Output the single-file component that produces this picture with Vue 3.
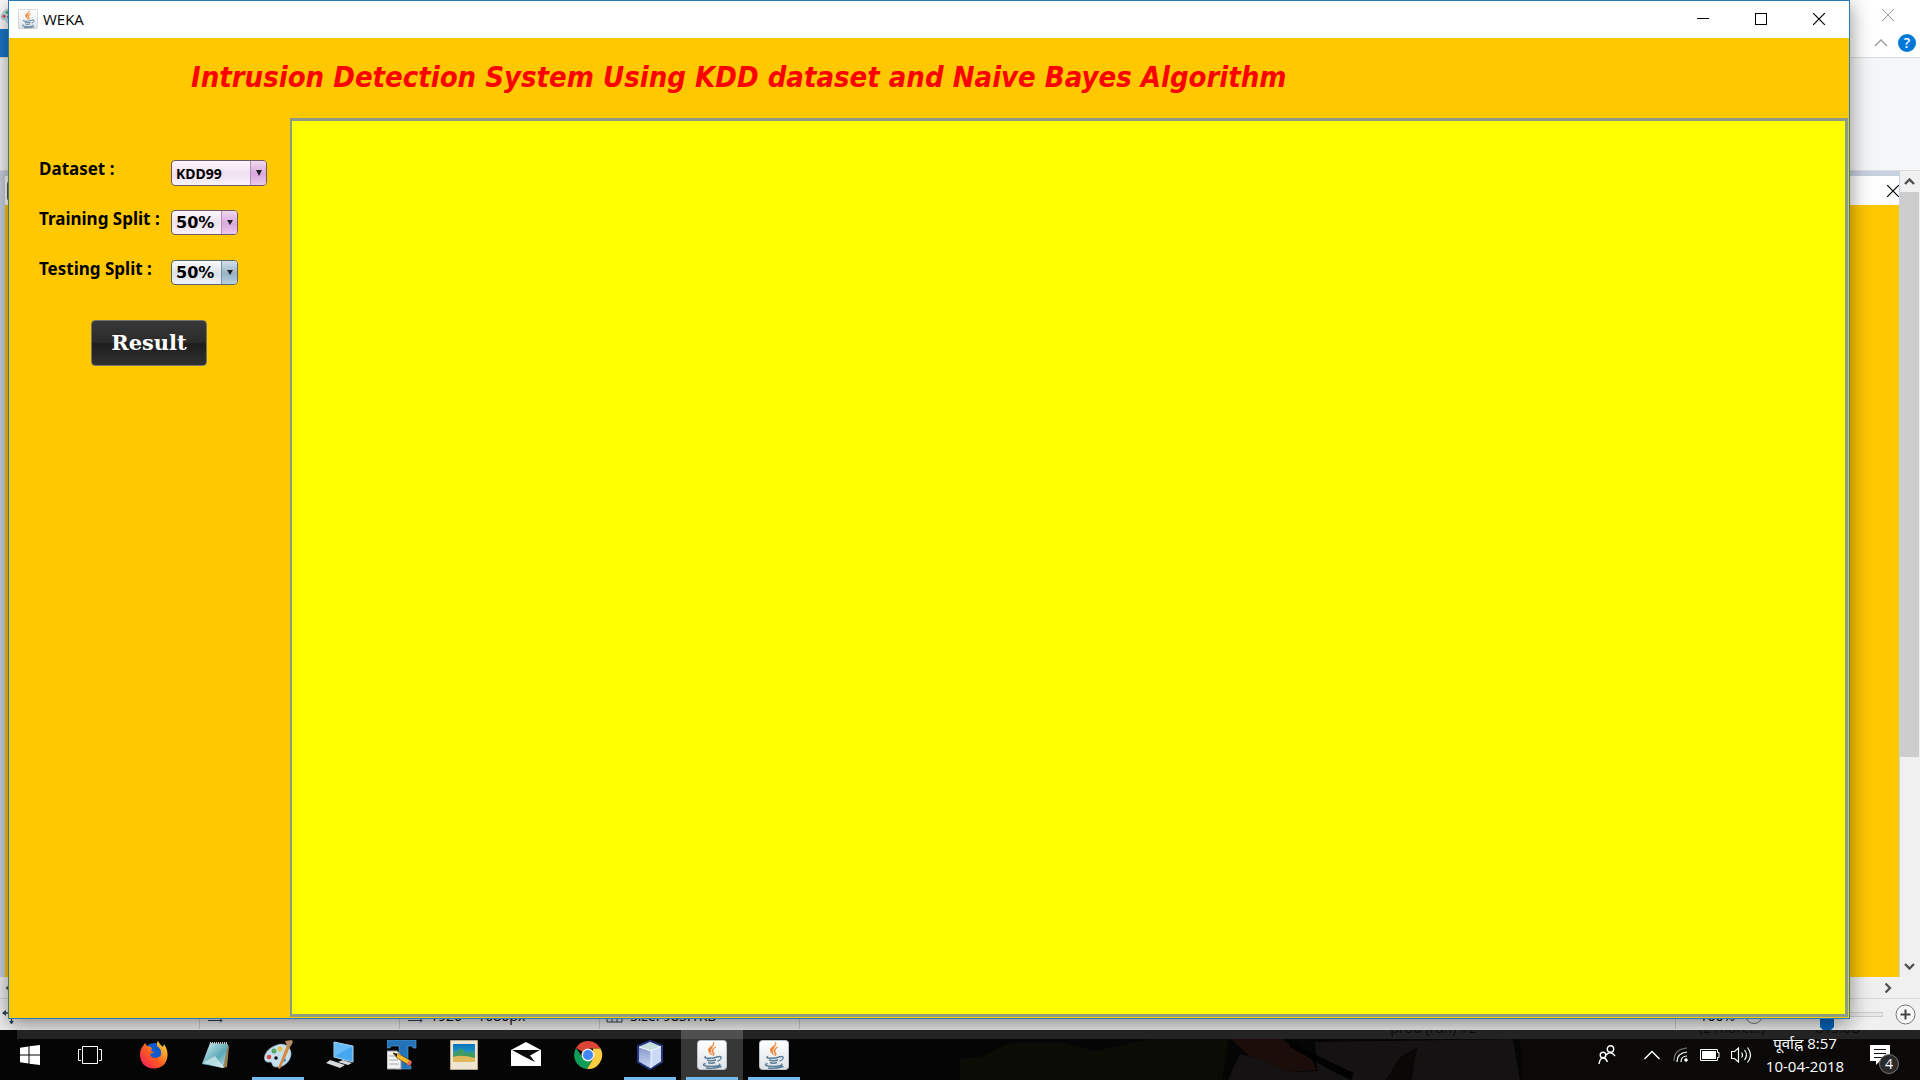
<script setup>
import { ref } from 'vue'

const dataset = ref('KDD99')
const training = ref('50%')
const testing = ref('50%')

const apps = [
  { id: 'firefox', name: 'Firefox' },
  { id: 'notepad', name: 'Notepad' },
  { id: 'paint', name: 'Paint', state: 'open' },
  { id: 'remote', name: 'Computer' },
  { id: 'typing', name: 'Text tool' },
  { id: 'photo', name: 'Pictures' },
  { id: 'mail', name: 'Mail' },
  { id: 'chrome', name: 'Chrome' },
  { id: 'netbeans', name: 'NetBeans', state: 'open' },
  { id: 'java', name: 'Java', state: 'active' },
  { id: 'java', name: 'Java', state: 'open' }
]
</script>

<template>
  <div class="screen">
    <div class="desktop">
      <section class="paint" aria-label="Paint">
        <header class="paint-top">
          <div class="paint-title">
            <svg class="palette" width="20" height="20" viewBox="0 0 30 30"><use href="#i-paint" /></svg>
            <button class="plain" aria-label="Close Paint">
              <svg width="14" height="14" viewBox="0 0 14 14"><path d="M1 1L13 13M13 1L1 13" stroke="#999" fill="none" /></svg>
            </button>
          </div>
          <div class="paint-tabs">
            <span class="file-tab"></span>
            <svg width="14" height="8" viewBox="0 0 14 8"><path d="M1 7L7 1L13 7" stroke="#999" stroke-width="1.3" fill="none" /></svg>
            <button class="help" aria-label="Help">?</button>
          </div>
        </header>
        <div class="ribbon"></div>
        <div class="canvas-row">
          <div class="canvas">
            <div class="inner-title">
              <svg width="16" height="20" viewBox="0 0 16 20"><rect x=".5" y=".5" width="15" height="19" rx="2" fill="#eee" stroke="#555" /></svg>
              <svg width="12" height="12" viewBox="0 0 12 12"><path d="M0 0L12 12M12 0L0 12" stroke="#000" stroke-width="1.2" fill="none" /></svg>
            </div>
            <div class="inner-body"></div>
          </div>
          <div class="vscroll">
            <svg width="19" height="21" viewBox="0 0 19 21"><path d="M5 13L9.500 8.500L14 13" stroke="#505050" stroke-width="2.400" fill="none" /></svg>
            <div class="track"><div class="thumb"></div></div>
            <svg width="19" height="22" viewBox="0 0 19 22"><path d="M5 9L9.500 13.500L14 9" stroke="#505050" stroke-width="2.400" fill="none" /></svg>
          </div>
        </div>
        <div class="hscroll">
          <svg width="8" height="10" viewBox="0 0 8 10"><path d="M7 1L2 5L7 9" stroke="#505050" stroke-width="2" fill="none" /></svg>
          <svg width="8" height="10" viewBox="0 0 8 10"><path d="M1.500 .5L6 5L1.500 9.500" stroke="#505050" stroke-width="2.200" fill="none" /></svg>
        </div>
        <footer class="status">
          <div class="cell"><svg width="16" height="20" viewBox="0 0 16 20"><path d="M2 8H14M10.500 3V19" stroke="#2c4257" stroke-width="1.400" /><path d="M1 8L5 5V11ZM10.500 19L8 16H13Z" fill="#2c4257" /></svg></div>
          <div class="cell"><svg width="18" height="16" viewBox="0 0 18 16"><path d="M1 10H16" stroke="#557" stroke-dasharray="1 1" /><path d="M2 13.500H16M14 11.500L16 13.500L14 15.500" stroke="#2c4257" fill="none" /></svg></div>
          <div class="cell"><svg width="18" height="16" viewBox="0 0 18 16"><path d="M2 13.500H16M14 11.500L16 13.500L14 15.500" stroke="#2c4257" fill="none" /></svg><span>1920 × 1080px</span></div>
          <div class="cell"><svg width="18" height="18" viewBox="0 0 18 18"><path d="M1 2H16V16H1ZM6 9V16M11 9V16" stroke="#2c4257" fill="none" /></svg><span>Size: 983.1KB</span></div>
          <div class="cell fill"></div>
          <div class="zoom">
            <span>100%</span>
            <svg width="18" height="18" viewBox="0 0 18 18"><circle cx="9" cy="9" r="8.500" fill="#f5f5f5" stroke="#777" /><path d="M4 9H14" stroke="#444" stroke-width="2" /></svg>
            <div class="slider"><svg width="14" height="22" viewBox="0 0 14 22"><path d="M0 0H14V14L7 21L0 14Z" fill="#0067c0" /></svg></div>
            <svg width="21" height="21" viewBox="0 0 21 21"><circle cx="10.500" cy="10.500" r="9.500" fill="#f7f7f7" stroke="#777" /><path d="M5.500 10.500H15.500M10.500 5.500V15.500" stroke="#444" stroke-width="2" /></svg>
          </div>
        </footer>
      </section>

      <main class="weka">
        <header class="titlebar">
          <svg class="app-icon" width="20" height="20" viewBox="0 0 30 30"><use href="#i-java" /></svg>
          <span class="app-name">WEKA</span>
          <button class="plain" aria-label="Minimize"><svg width="12" height="12" viewBox="0 0 12 12"><path d="M0 5.500H12" stroke="#000" /></svg></button>
          <button class="plain" aria-label="Maximize"><svg width="12" height="12" viewBox="0 0 12 12"><rect x=".5" y=".5" width="11" height="11" fill="none" stroke="#000" /></svg></button>
          <button class="plain" aria-label="Close"><svg width="12" height="12" viewBox="0 0 12 12"><path d="M0 0L12 12M12 0L0 12" stroke="#000" stroke-width="1.200" /></svg></button>
        </header>
        <h1>Intrusion Detection System Using KDD dataset and Naive Bayes Algorithm</h1>
        <div class="work">
          <form class="options" @submit.prevent>
            <div class="row">
              <label for="dataset">Dataset :</label>
              <span class="combo wide">
                <select id="dataset" v-model="dataset"><option>KDD99</option></select>
                <span class="arrow"><svg width="8" height="8" viewBox="0 0 8 8"><path d="M1 1H7L4 7Z" fill="#222" /></svg></span>
              </span>
            </div>
            <div class="row">
              <label for="training">Training Split :</label>
              <span class="combo">
                <select id="training" v-model="training"><option>50%</option></select>
                <span class="arrow"><svg width="8" height="8" viewBox="0 0 8 8"><path d="M1 1H7L4 6Z" fill="#222" /></svg></span>
              </span>
            </div>
            <div class="row">
              <label for="testing">Testing Split :</label>
              <span class="combo blue">
                <select id="testing" v-model="testing"><option>50%</option></select>
                <span class="arrow"><svg width="8" height="8" viewBox="0 0 8 8"><path d="M1 1H7L4 6Z" fill="#222" /></svg></span>
              </span>
            </div>
            <button class="result" type="submit">Result</button>
          </form>
          <div class="output"></div>
        </div>
      </main>
    </div>

    <nav class="taskbar" aria-label="Taskbar">
      <svg class="wallpaper" viewBox="0 0 960 41" preserveAspectRatio="none">
        <path d="M0 20L20 18L50 4L100 3L135 12L190 0H268L262 41H0Z" fill="#0b0c06" />
        <g transform="translate(47 0) scale(1.445 1)">
          <path d="M155 0H190L210 18L214 31L195 33L170 20Z" fill="#1b0e0a" />
          <path d="M161 15L172 19L195 33L215 32L213 3L350 0L355 41H153Z" fill="#141213" />
          <path d="M195 0L205 10L240 34L238 41L225 32L196 8Z" fill="#020202" />
          <path d="M272 18L284 8L280 41H262Z" fill="#0a0707" />
        </g>
        <path d="M560 0H960V41H562Z" fill="#0a0908" />
      </svg>
      <div class="taskbar-edge">
        <span class="ghost run">prod (run) #2</span>
        <span class="ghost more">(2 more...)</span>
        <span class="ghost pos">815:8B</span>
      </div>
      <div class="launch">
        <button class="task system" aria-label="Start">
          <svg width="20" height="20" viewBox="0 0 20 20"><path d="M0 2.700L8.500 1.500V9.500H0ZM9.500 1.300L20 0V9.500H9.500ZM0 10.500H8.500V18.500L0 17.300ZM9.500 10.500H20V20L9.500 18.700Z" fill="#fff" /></svg>
        </button>
        <button class="task system" aria-label="Task view">
          <svg width="24" height="18" viewBox="0 0 24 18"><path d="M4.500 .5H19.500V17.500H4.500ZM3 3.500H.5V14.500H3M21 3.500H23.500V14.500H21" fill="none" stroke="#fff" /></svg>
        </button>
        <button v-for="(app, i) in apps" :key="i" class="task" :class="app.state" :aria-label="app.name">
          <svg width="30" height="30" viewBox="0 0 30 30"><use :href="'#i-' + app.id" /></svg>
        </button>
      </div>
      <div class="tray">
        <svg class="people" width="18" height="20" viewBox="0 0 18 20"><g fill="none" stroke="#fff" stroke-width="1.400"><circle cx="12.500" cy="4" r="3.200" /><circle cx="5" cy="10" r="2.800" /><path d="M8 10Q12.500 5 17 11M1 19Q2 13 5 13Q8 13 9.500 17" /></g></svg>
        <svg class="up" width="16" height="10" viewBox="0 0 16 10"><path d="M.5 9L8 1.500L15.500 9" fill="none" stroke="#fff" stroke-width="1.400" /></svg>
        <svg class="wifi" width="16" height="16" viewBox="0 0 16 16"><g fill="none" stroke-width="1.200"><path d="M1 14Q1 2 14 1" stroke="#777" /><path d="M4 15Q4 6 14 5M8 15Q8 9 14 9" stroke="#fff" /></g><circle cx="13" cy="13" r="1.800" fill="#fff" /></svg>
        <svg class="battery" width="20" height="12" viewBox="0 0 20 12"><path d="M.5 .5H17.500V3.500H19V8.500H17.500V11.500H.5Z" fill="none" stroke="#fff" /><path d="M2 2H16V10H2Z" fill="#fff" /></svg>
        <svg class="sound" width="21" height="18" viewBox="0 0 21 18"><path d="M.5 5.500H3.500L7.500 2V16L3.500 12.500H.5ZM10.500 6.500Q12.500 9 10.500 11.500M13.500 4Q17.500 9 13.500 14M16.500 1.500Q22.500 9 16.500 16.500" fill="none" stroke="#fff" stroke-width="1.200" /></svg>
        <time class="clock"><span>पूर्वाह्न 8:57</span><span>10-04-2018</span></time>
        <button class="notices" aria-label="Notifications">
          <svg width="20" height="20" viewBox="0 0 20 20"><path d="M0 0H20V16H10L6 20V16H0Z" fill="#fff" /><path d="M4 4.500H16M4 8.500H16M4 12.500H12" stroke="#111" /></svg>
          <span class="count">4</span>
        </button>
      </div>
    </nav>

    <svg class="defs" width="0" height="0" aria-hidden="true">
      <defs>
        <linearGradient id="g-tile" x2="0" y2="1"><stop stop-color="#fff" /><stop offset="1" stop-color="#dfe2e5" /></linearGradient>
        <linearGradient id="g-fox" x1="0" y1="1" x2="1" y2="0"><stop stop-color="#f0146a" /><stop offset=".45" stop-color="#ff5a20" /><stop offset="1" stop-color="#ffe33a" /></linearGradient>
        <linearGradient id="g-note" x2="1" y2="1"><stop stop-color="#d6eef0" /><stop offset=".6" stop-color="#5aa9b8" /><stop offset="1" stop-color="#cfe8ec" /></linearGradient>
        <linearGradient id="g-sky" x2="0" y2="1"><stop stop-color="#0874b8" /><stop offset="1" stop-color="#48b8d8" /></linearGradient>
        <linearGradient id="g-cube" x2="0" y2="1"><stop stop-color="#8798cc" /><stop offset="1" stop-color="#c9d6f4" /></linearGradient>
        <symbol id="i-java" viewBox="0 0 30 30">
          <rect x=".5" y=".5" width="29" height="29" rx="3" fill="url(#g-tile)" stroke="#b8c0c8" />
          <path d="M16.500 2C19 6 11 8 14.500 15C10 11 11 8 14 6.500C16 5 17 4 16.500 2ZM19 7C17 9 14.500 10 17 13C17.500 14 17 15 16 16C17 13 14 12 15 10C15.500 8.500 17 7.500 19 7Z" fill="#ee8232" stroke="#ee8232" stroke-width=".6" />
          <g fill="none" stroke="#567b98" stroke-width="1.400"><path d="M9 16.500Q6 18 11 18.300Q17 18.500 20 17M10 20Q14 21.500 19 20M11 22.500Q14 24 18 22.500M20 17Q25 15.500 24 18.500Q23 20.500 20.500 21" /><path d="M8.500 23.500Q4 25 9 26Q16 27 22 25.500Q24 25 22 24M9 28Q18 29 24.500 26.500" /></g>
        </symbol>
        <symbol id="i-firefox" viewBox="0 0 30 30">
          <circle cx="15.500" cy="14" r="11" fill="#0b5bd0" />
          <path d="M4 6L6 3L8 6Q11 6 13 8L12 11Q14 12 16 12L11 14Q12 18 16 18Q20 18 22 15Q23 9 18 6Q17 3 19 1Q21 5 24 7L25 4Q29 10 28.500 16Q27 28 15 28.500Q2 28 1 15Q1 9 4 6Z" fill="url(#g-fox)" />
        </symbol>
        <symbol id="i-notepad" viewBox="0 0 30 30">
          <path d="M24 3L28 6L26 27L22 28Z" fill="#9a8050" />
          <path d="M9 3L27 4L22 28L1 24Z" fill="url(#g-note)" />
          <path d="M2 23L14 16L23 27L22 28Z" fill="#e4f3f5" opacity=".65" />
          <path d="M9 3H27" stroke="#ccc" stroke-width="2" stroke-dasharray="1 1" />
        </symbol>
        <symbol id="i-paint" viewBox="0 0 30 30">
          <path d="M14 5C21 2 29 7 28 15C27 22 20 28 13 27C8 27 10 22 7 22C3 23 0 20 2 15C4 10 8 7 14 5Z" fill="#c5dfee" stroke="#8ba9bd" stroke-width=".6" />
          <circle cx="6" cy="17" r="2.300" fill="#d94a48" /><circle cx="11" cy="11" r="2.500" fill="#55a765" /><circle cx="17" cy="9" r="2.500" fill="#e3c04c" /><circle cx="13" cy="18" r="1.800" fill="#111" /><circle cx="21" cy="20" r="2" fill="#508fcc" />
          <path d="M15 28L24 5L27 7L17 29Z" fill="#d58b3e" /><path d="M22 1L29 0Q31 3 27 7L24 6Z" fill="#b88d68" />
        </symbol>
        <symbol id="i-remote" viewBox="0 0 30 30">
          <path d="M9 2L28 6V22L9 17Z" fill="#46a8f0" stroke="#b4d7ee" /><path d="M9 2L28 6L10 16Z" fill="#7fc8ff" opacity=".6" />
          <path d="M18 20L27 23L23 25L13 22ZM5 20L20 25L15 28L1 23Z" fill="#d7dadd" />
        </symbol>
        <symbol id="i-typing" viewBox="0 0 30 30">
          <path d="M0 0H29V8H26L25 6H21V26H24V29H9V26H12V6H4L3 8H0Z" fill="#2472b8" stroke="#5ba5df" stroke-width=".6" />
          <path d="M0 11H10L14 15V29H0Z" fill="#f2f2f2" stroke="#999" /><path d="M2 16H9M2 20H11M2 24H12" stroke="#aaa" />
          <path d="M6 13L12 14L24 21L22 25L10 18Z" fill="#f8bd2b" stroke="#6c4b13" stroke-width=".7" /><path d="M6 13L10 14V17Z" fill="#111" /><path d="M22 20L25 22L23 26L20 24Z" fill="#e66a5c" />
        </symbol>
        <symbol id="i-photo" viewBox="0 0 30 30">
          <path d="M1.500 .5H28.500V29.500H1.500Z" fill="#eee5d2" stroke="#b9a78a" /><path d="M4 4H26V22H4Z" fill="url(#g-sky)" />
          <path d="M4 15Q7 10 10 11Q11 6 14 10Q18 16 22 11Q25 11 26 15V18H4Z" fill="#3e9b62" /><path d="M4 17Q12 14 26 18V22H4Z" fill="#dfb85c" />
        </symbol>
        <symbol id="i-mail" viewBox="0 0 30 30"><path d="M0 10L15 2L30 10V26H0Z" fill="#fff" /><path d="M1 10H29L19 15.500L24 22L12 16Z" fill="#080808" /></symbol>
        <symbol id="i-chrome" viewBox="0 0 30 30">
          <path d="M15 15L3 8A14 14 0 0 1 27.500 8.500H15Z" fill="#db4437" /><path d="M3 8A14 14 0 0 0 14 29L20 18L15 15L10 18Z" fill="#0f9d58" /><path d="M27.500 8.500A14 14 0 0 1 14 29L20.500 18L20 9V8.500Z" fill="#ffcd40" />
          <circle cx="15" cy="15" r="6.500" fill="#f1f1f1" /><circle cx="15" cy="15" r="5" fill="#4285f4" />
        </symbol>
        <symbol id="i-netbeans" viewBox="0 0 30 30">
          <path d="M15 1L27 6V22L15 29L3 22V6Z" fill="#b5c3ee" stroke="#26367c" stroke-width="2" /><path d="M15 2L26 6.500L16 11L4 7Z" fill="#c7dfdc" /><path d="M4 7L16 11V28L4 21Z" fill="url(#g-cube)" /><path d="M16 11L26 6.500V21L16 28Z" fill="#cad9f6" /><path d="M4 7L16 11L26 6.500M16 11V28" fill="none" stroke="#f4f8ff" />
        </symbol>
      </defs>
    </svg>
  </div>
</template>

<style>
body { overflow: hidden; }
</style>

<style scoped>
* { box-sizing: border-box; }
svg { display: block; flex: none; }
button { padding: 0; border: 0; background: none; font: inherit; color: inherit; }
.screen { height: 100vh; display: flex; flex-direction: column; font: 15px/20px "Open Sans", "Noto Sans", sans-serif; color: #000; overflow: hidden; }
.desktop { position: relative; flex: 1; min-height: 0; overflow: hidden; display: flex; flex-direction: column; }
.defs { position: absolute; }
.plain { display: grid; place-items: center; }

.paint { flex: 1; min-height: 0; display: flex; flex-direction: column; background: #f0f0f0; }
.paint-top { height: 58px; background: #fff; border-bottom: 1px solid #dadbdc; }
.paint-title { height: 29px; display: flex; justify-content: space-between; align-items: center; padding-right: 25px; }
.paint-tabs { height: 28px; display: flex; align-items: center; gap: 10px; padding-right: 4px; }
.file-tab { width: 60px; height: 28px; background: #1979ca; margin-right: auto; }
.help { width: 18px; height: 18px; border-radius: 50%; background: #0078d7; color: #fff; font-size: 14px; line-height: 18px; font-weight: 600; }
.ribbon { height: 113px; background: #f5f6f7; border-bottom: 1px solid #dadbdc; }
.canvas-row { flex: 1; min-height: 0; display: flex; background: #c8d1e1; }
.canvas { flex: 1; display: flex; flex-direction: column; margin: 5px 1px 0 5px; }
.inner-title { height: 29px; background: #fff; display: flex; justify-content: space-between; align-items: center; padding-left: 2px; }
.inner-body { flex: 1; background: #ffc800; }
.vscroll { width: 20px; display: flex; flex-direction: column; background: #f0f0f0; }
.track { flex: 1; }
.thumb { width: 19px; height: 74%; background: #cdcdcd; }
.hscroll { height: 21px; display: flex; justify-content: space-between; align-items: center; padding: 0 28px 0 5px; }
.status { height: 32px; display: flex; align-items: center; border-top: 1px solid #d7d7d7; font-size: 14px; }
.status span { padding-top: 2px; }
.cell { width: 200px; height: 28px; display: flex; align-items: center; gap: 6px; padding-left: 6px; border-right: 1px solid #ccc; }
.cell:first-child { padding-left: 1px; }
.cell.fill { flex: 1; }
.zoom { width: 244px; display: flex; align-items: center; gap: 8px; padding-right: 4px; justify-content: flex-end; }
.zoom span { margin-right: 2px; }
.slider { width: 112px; height: 5px; margin-right: 4px; border: 1px solid #ccc; background: #e7e7e7; display: grid; place-items: center; }

.weka { position: absolute; inset: 0 70px 11px 8px; display: flex; flex-direction: column; background: #ffc800; border: 1px solid #2a78b4; box-shadow: 0 5px 20px rgba(0, 0, 0, .45); }
.titlebar { height: 37px; background: #fff; display: flex; align-items: center; padding: 0 1px 2px 9px; }
.app-name { margin-left: 5px; margin-right: auto; }
.titlebar .plain { width: 58px; height: 35px; }
h1 { margin: 0; height: 80px; padding: 19px 0 0 182px; font: italic 700 29px/40px "DejaVu Sans Condensed", "DejaVu Sans", sans-serif; color: #f00; white-space: nowrap; }
.work { flex: 1; min-height: 0; display: flex; }
.options { width: 281px; padding: 42px 0 0 30px; }
.row { height: 50px; display: flex; align-items: flex-start; }
.row label { width: 132px; font: 700 17px/18px "Noto Sans", sans-serif; white-space: nowrap; }
.combo { position: relative; width: 67px; height: 25px; }
.combo.wide { width: 96px; height: 26px; }
select { appearance: none; width: 100%; height: 100%; margin: 0; padding: 1px 0 0 4px; border: 1px solid #6d5a66; border-radius: 4px; background: linear-gradient(#fdf6fc, #efe1f0 55%, #faf2fb); color: #000; font: 700 16px/22px "DejaVu Sans", sans-serif; }
.wide select { font: 700 14px/24px "Noto Sans", sans-serif; }
.arrow { position: absolute; top: 1px; right: 1px; bottom: 1px; width: 16px; display: grid; place-items: center; border-left: 1px solid #b58db5; border-radius: 0 3px 3px 0; background: linear-gradient(#f0d8f0, #d8a8dc 55%, #ecc8ee); pointer-events: none; }
.blue select { border-color: #5b646c; background: linear-gradient(#fafbfc, #dde2e8 55%, #eff2f5); }
.blue .arrow { border-color: #7890a4; background: linear-gradient(#d3e0e9, #98b2c6 55%, #b9d0de); }
.result { display: block; width: 116px; height: 46px; margin: 10px 0 0 52px; border: 1px solid #77736a; border-radius: 4px; background: linear-gradient(#383838, #2b2b2b 48%, #1e1e1e 52%, #303030); color: #fff; font: 700 21px/40px "DejaVu Serif", serif; }
.output { flex: 1; margin: 0 1px 1px 0; background: #ff0; border: 3px solid #8d9d84; border-left-width: 2px; }

.taskbar { position: relative; height: 50px; background: #050505; color: #fff; display: flex; justify-content: space-between; }
.wallpaper { position: absolute; right: 0; bottom: 0; width: 50%; height: 41px; }
.taskbar-edge { position: absolute; inset: 0 0 auto 17px; height: 9px; background: #232323; overflow: hidden; color: #0c0c0c; font-size: 14px; line-height: 16px; }
.ghost { position: absolute; top: -10px; }
.run { right: 443px; }
.more { right: 155px; }
.pos { right: 60px; }
.launch { position: relative; display: flex; }
.task { width: 62px; height: 50px; display: grid; place-items: center; border: 5px solid transparent; border-width: 0 5px; }
.task.system { width: 60px; }
.system + .task:not(.system) { margin-left: 3px; }
.task.open { box-shadow: inset 0 -3px #76b9ed; background-clip: padding-box; }
.task.active { background: rgba(255, 255, 255, .2); box-shadow: inset 0 -3px #76b9ed; }
.tray { position: relative; display: flex; align-items: center; gap: 11px; }
.up { margin-left: 17px; margin-right: 2px; }
.clock { width: 80px; margin-left: 2px; text-align: center; font-size: 15px; line-height: 23px; white-space: nowrap; }
.clock span { display: block; }
.notices { position: relative; margin: 0 30px 0 14px; }
.count { position: absolute; left: 9px; top: 9px; width: 20px; height: 20px; border: 1px solid #777; border-radius: 50%; background: #2b2b2b; font-size: 14px; line-height: 18px; text-align: center; }
</style>
